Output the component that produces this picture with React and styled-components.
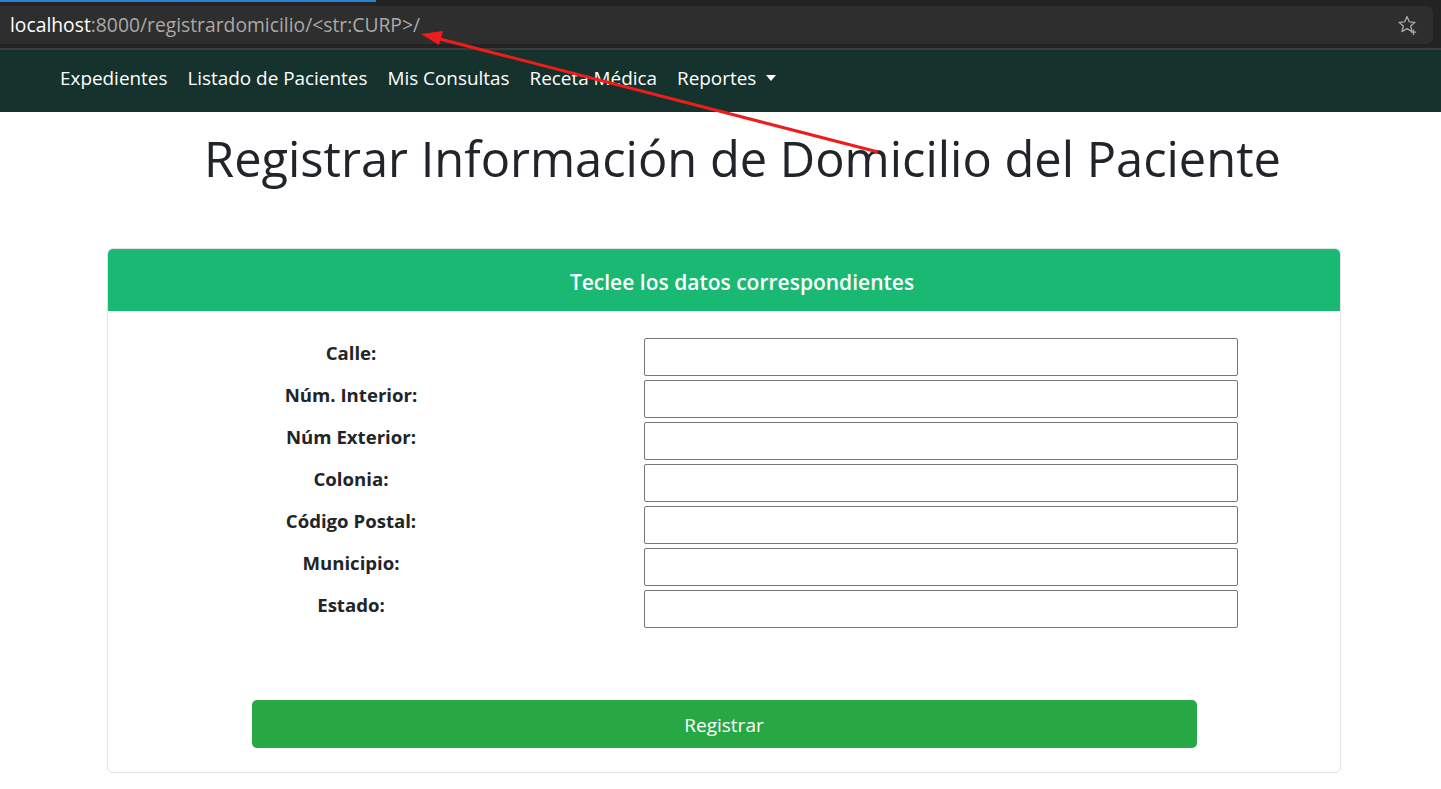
import React from "react";
import styled, { createGlobalStyle } from "styled-components";

const GlobalStyle = createGlobalStyle`
  html, body { margin: 0; padding: 0; background: #ffffff; }
  body { font-family: "Open Sans", "Noto Sans", sans-serif; color: #212529; }
  * { box-sizing: border-box; }
`;

const Page = styled.div`
  position: relative;
  width: 1441px;
  min-height: 789px;
  overflow: hidden;
`;

const Chrome = styled.div`
  position: relative;
  height: 50px;
  background: #232323;
  padding: 6px 8px 0 0;
  border-bottom: 2px solid #3c3c3c;
`;

const TabLine = styled.div`
  position: absolute;
  left: 0;
  top: 0;
  width: 376px;
  height: 2px;
  background: #2f7fd6;
`;

const AddressBar = styled.div`
  height: 38px;
  background: #2e2e2e;
  border-radius: 0 7px 7px 0;
  display: flex;
  align-items: center;
  justify-content: space-between;
  padding: 0 14px 0 10px;
  font-size: 19.3px;
`;

const Url = styled.div`
  color: #a9a9a9;
  white-space: nowrap;
  padding-bottom: 2px;
`;

const Host = styled.span`
  color: #ffffff;
`;

const Navbar = styled.nav`
  height: 62px;
  background: #15322d;
  display: flex;
  align-items: center;
  padding: 0 0 6px 50px;
`;

const NavLink = styled.a`
  color: #ffffff;
  font-size: 18.9px;
  padding: 0 10px;
  text-decoration: none;
  display: flex;
  align-items: center;
  white-space: nowrap;
`;

const Caret = styled.span`
  display: inline-block;
  margin-left: 10px;
  width: 0;
  height: 0;
  border-left: 5.5px solid transparent;
  border-right: 5.5px solid transparent;
  border-top: 6px solid #ffffff;
`;

const Title = styled.h1`
  margin: 16px 0 0;
  padding-left: 44px;
  text-align: center;
  font-size: 48.8px;
  font-weight: 400;
  line-height: 60px;
  color: #212529;
`;

const Card = styled.section`
  margin: 60px 0 0 107px;
  width: 1234px;
  border: 1px solid #e2e2e2;
  border-radius: 6px;
  overflow: hidden;
  background: #fff;
`;

const CardHeader = styled.div`
  height: 62px;
  background: #19b973;
  color: #ffffff;
  display: flex;
  align-items: center;
  justify-content: center;
  padding: 3px 0 0 36px;
  font-size: 21px;
  font-weight: 600;
`;

const CardBody = styled.div`
  padding: 27px 0 24px;
`;

const Form = styled.form`
  display: flex;
  flex-direction: column;
  align-items: center;
`;

const Fields = styled.div`
  align-self: stretch;
  display: grid;
  grid-template-columns: 486px 594px;
  column-gap: 50px;
  row-gap: 4px;
`;

const Label = styled.label`
  text-align: center;
  font-weight: 700;
  font-size: 18.6px;
  line-height: 26px;
  padding-top: 2px;
  color: #212529;
`;

const Input = styled.input`
  height: 38px;
  border: 1px solid #767676;
  border-radius: 2px;
  background: #fff;
  margin: 0;
`;

const Submit = styled.button`
  margin-top: 72px;
  width: 945px;
  height: 48px;
  border: none;
  border-radius: 5px;
  background: #28a745;
  color: #ffffff;
  font-family: inherit;
  font-size: 19px;
  padding-top: 2px;
  cursor: pointer;
`;

const Arrow = styled.svg`
  position: absolute;
  left: 0;
  top: 0;
  pointer-events: none;
`;

const fields = [
  "Calle:",
  "Núm. Interior:",
  "Núm Exterior:",
  "Colonia:",
  "Código Postal:",
  "Municipio:",
  "Estado:",
];

const navItems = ["Expedientes", "Listado de Pacientes", "Mis Consultas", "Receta Médica"];

function StarIcon() {
  return (
    <svg width="22" height="22" viewBox="0 0 22 22" fill="none" stroke="#a8a8a8" strokeWidth="1.3">
      <path d="M10 2.5 L12.3 7.8 L18 8.3 L13.7 12 L15 17.6 L10 14.6 L5 17.6 L6.3 12 L2 8.3 L7.7 7.8 Z" strokeLinejoin="round" />
      <path d="M16.5 15.5 V21 M13.8 18.2 H19.2" />
    </svg>
  );
}

export default function App() {
  return (
    <Page>
      <GlobalStyle />
      <Chrome>
        <TabLine />
        <AddressBar>
          <Url>
            <Host>localhost</Host>:8000/registrardomicilio/&lt;str:CURP&gt;/
          </Url>
          <StarIcon />
        </AddressBar>
      </Chrome>
      <Navbar>
        {navItems.map((n) => (
          <NavLink key={n} href="#">{n}</NavLink>
        ))}
        <NavLink href="#">
          Reportes<Caret />
        </NavLink>
      </Navbar>
      <Title>Registrar Información de Domicilio del Paciente</Title>
      <Card>
        <CardHeader>Teclee los datos correspondientes</CardHeader>
        <CardBody>
          <Form onSubmit={(e) => e.preventDefault()}>
            <Fields>
              {fields.map((f) => (
                <React.Fragment key={f}>
                  <Label>{f}</Label>
                  <Input type="text" />
                </React.Fragment>
              ))}
            </Fields>
            <Submit type="submit">Registrar</Submit>
          </Form>
        </CardBody>
      </Card>
      <Arrow width="1441" height="789" viewBox="0 0 1441 789">
        <line x1="436" y1="38" x2="878" y2="152" stroke="#ee1c1c" strokeWidth="3" />
        <polygon points="421,34 443,31 439,45" fill="#ee1c1c" />
      </Arrow>
    </Page>
  );
}
